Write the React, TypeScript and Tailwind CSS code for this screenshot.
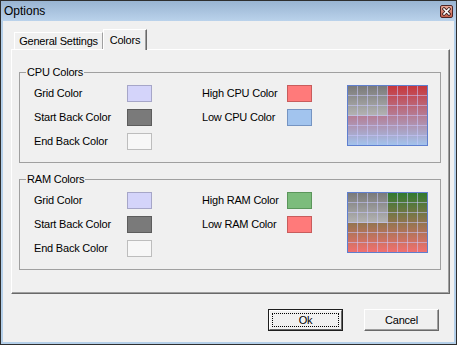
import React from 'react'

type Swatch = { label: string; color: string; edge: string }

const leftItems: Swatch[] = [
  { label: 'Grid Color', color: '#d4d4fa', edge: '#a6a6c8' },
  { label: 'Start Back Color', color: '#7a7a7a', edge: '#5c5c5c' },
  { label: 'End Back Color', color: '#f7f7f7', edge: '#bdbdbd' },
]

const cpuRight: Swatch[] = [
  { label: 'High CPU Color', color: '#ff7a7a', edge: '#c85c5c' },
  { label: 'Low CPU Color', color: '#a2c4ee', edge: '#7594c2' },
]

const ramRight: Swatch[] = [
  { label: 'High RAM Color', color: '#7cbc7c', edge: '#5b965b' },
  { label: 'Low RAM Color', color: '#ff7a7a', edge: '#c85c5c' },
]

function ColorBox({ color, edge }: { color: string; edge: string }) {
  return (
    <div
      className="w-[25px] h-[17px] border"
      style={{ backgroundColor: color, borderColor: edge }}
    />
  )
}

function SwatchGrid({ items, labelWidth }: { items: Swatch[]; labelWidth: 'left' | 'right' }) {
  return (
    <div
      className={
        labelWidth === 'left'
          ? 'grid grid-cols-[93px_25px] gap-y-[7px] items-center'
          : 'grid grid-cols-[85px_25px] gap-y-[7px] items-center'
      }
    >
      {items.map((s) => (
        <React.Fragment key={s.label}>
          <span className="whitespace-nowrap leading-[13px]">{s.label}</span>
          <ColorBox color={s.color} edge={s.edge} />
        </React.Fragment>
      ))}
    </div>
  )
}

// little usage graph preview drawn like the original control
function Preview({ id, high, low, frame }: { id: string; high: string; low: string; frame: string }) {
  const cols = [10, 20, 30, 40, 50, 60, 70]
  const rows = [10, 20, 30, 40, 50]
  return (
    <svg width="81" height="61" viewBox="0 0 81 61" className="block">
      <defs>
        <linearGradient id={`${id}-bg`} x1="0" y1="0" x2="0" y2="1">
          <stop offset="0" stopColor="#787878" />
          <stop offset="1" stopColor="#eeeeee" />
        </linearGradient>
        <linearGradient id={`${id}-fill`} x1="0" y1="0" x2="0" y2="1">
          <stop offset="0" stopColor={high} />
          <stop offset="1" stopColor={low} />
        </linearGradient>
      </defs>
      <rect x="0" y="0" width="81" height="61" fill={`url(#${id}-bg)`} />
      <polygon points="0.5,31 40.5,31 40.5,0.5 80.5,0.5 80.5,60.5 0.5,60.5" fill={`url(#${id}-fill)`} />
      {cols.map((x) => (
        <line key={`c${x}`} x1={x + 0.5} y1="0" x2={x + 0.5} y2="61" stroke="#c8c8ff" strokeOpacity="0.55" />
      ))}
      {rows.map((y) => (
        <line key={`r${y}`} x1="0" y1={y + 0.5} x2="81" y2={y + 0.5} stroke="#c8c8ff" strokeOpacity="0.55" />
      ))}
      <rect x="0.5" y="0.5" width="80" height="60" fill="none" stroke={frame} />
    </svg>
  )
}

function Group({ title, right, preview }: { title: string; right: Swatch[]; preview: React.ReactNode }) {
  return (
    <fieldset className="w-[422px] border border-[#a0a0a0] px-[6px] pt-[6px] pb-[12px]">
      <legend className="px-[1px] leading-[13px]">{title}</legend>
      <div className="flex items-start pl-[8px]">
        <SwatchGrid items={leftItems} labelWidth="left" />
        <div className="ml-[50px]">
          <SwatchGrid items={right} labelWidth="right" />
        </div>
        <div className="ml-[35px]">{preview}</div>
      </div>
    </fieldset>
  )
}

export default function App() {
  return (
    <div className="w-[457px] h-[345px] border border-[#2e2e2e] bg-[#b4cfe9] flex flex-col font-['Liberation_Sans',Arial,sans-serif] text-[11px] tracking-[-0.2px] text-black">
      {/* Title bar */}
      <div className="h-[20px] flex items-center justify-between pl-[3px] pr-[3px] bg-gradient-to-b from-[#99b4d2] to-[#bad2eb]">
        <span className="text-[12px] leading-[14px] tracking-normal">Options</span>
        <div className="w-[13px] h-[13px] rounded-[2px] border border-[#4e2424] bg-gradient-to-b from-[#e8a898] to-[#c45e4a] flex items-center justify-center">
          <svg width="9" height="9" viewBox="0 0 9 9">
            <path d="M2 2L7 7M7 2L2 7" stroke="#3a1c1c" strokeWidth="3.2" strokeLinecap="square" />
            <path d="M2 2L7 7M7 2L2 7" stroke="#ffffff" strokeWidth="1.6" strokeLinecap="square" />
          </svg>
        </div>
      </div>

      {/* Client area */}
      <div className="flex-1 mx-[2px] mb-[2px] bg-[#f0f0f0] flex flex-col pt-[8px] pl-[8px]">
        {/* Tabs */}
        <div className="flex items-end h-[20px] pl-[3px]">
          <div className="h-[17px] w-[89px] border-t border-l border-white border-r border-r-[#a0a0a0] flex items-center justify-center whitespace-nowrap leading-[13px]">
            General Settings
          </div>
          <div className="relative z-10 h-[21px] w-[44px] mb-[-1px] bg-[#f0f0f0] border-t border-l border-white border-r border-r-[#696969] shadow-[inset_-1px_0_0_#a0a0a0] flex items-center justify-center leading-[13px]">
            Colors
          </div>
        </div>

        {/* Tab page */}
        <div className="w-[439px] h-[245px] border-t border-l border-white border-r border-b border-r-[#696969] border-b-[#696969] shadow-[inset_-1px_-1px_0_#a0a0a0] pl-[7px] pt-[16px] flex flex-col">
          <Group
            title="CPU Colors"
            right={cpuRight}
            preview={<Preview id="cpu" high="#c8363a" low="#a2c4ee" frame="#5f7fcf" />}
          />
          <div className="mt-[10px]">
            <Group
              title="RAM Colors"
              right={ramRight}
              preview={<Preview id="ram" high="#2f7a2f" low="#f47070" frame="#5f7fcf" />}
            />
          </div>
        </div>

        {/* Buttons */}
        <div className="w-[439px] flex justify-end gap-[21px] pr-[11px] mt-[15px]">
          <div className="w-[75px] h-[22px] border border-[#1e1e1e]">
            <div className="h-full border-t border-l border-white border-r border-b border-r-[#696969] border-b-[#696969] p-[2px]">
              <div className="h-full border border-dotted border-black flex items-center justify-center leading-[13px]">
                Ok
              </div>
            </div>
          </div>
          <div className="w-[75px] h-[22px] border-t border-l border-white border-r border-b border-r-[#696969] border-b-[#696969] shadow-[inset_-1px_-1px_0_#a0a0a0] flex items-center justify-center leading-[13px]">
            Cancel
          </div>
        </div>
      </div>
    </div>
  )
}
